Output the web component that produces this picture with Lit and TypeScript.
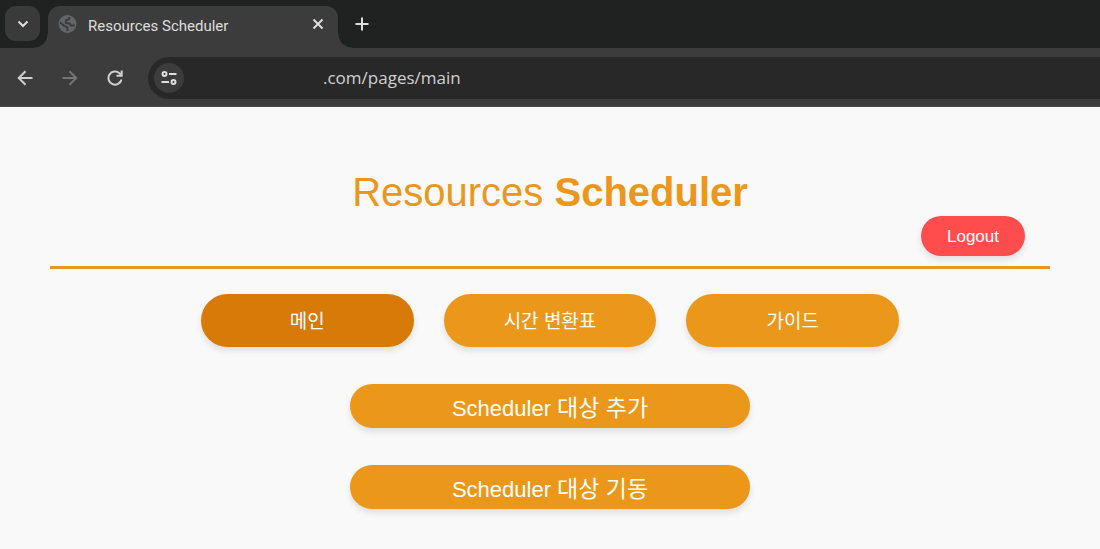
import { LitElement, html, css } from "lit";
import { customElement, state } from "lit/decorators.js";

@customElement("browser-bar")
class BrowserBar extends LitElement {
  static styles = css`
    :host {
      display: block;
      background: #3c3c3c;
      font-family: "Open Sans", "Noto Sans", sans-serif;
      color: #dedede;
    }
    button {
      border: 0;
      padding: 0;
      background: none;
      color: inherit;
      display: grid;
      place-items: center;
      flex: none;
    }
    svg {
      display: block;
      fill: none;
      stroke: currentColor;
      stroke-width: 2;
    }
    .tabs {
      display: flex;
      height: 48px;
      box-sizing: border-box;
      padding: 6px 0 0 5px;
      background: #202222;
    }
    .menu {
      width: 35px;
      height: 35px;
      border-radius: 11px;
      background: #3a3a3a;
    }
    .tab {
      position: relative;
      display: flex;
      align-items: center;
      box-sizing: border-box;
      width: 290px;
      margin-left: 8px;
      padding: 0 14px 6px 10px;
      border-radius: 12px 12px 0 0;
      background: #3c3c3c;
    }
    .tab::before,
    .tab::after {
      content: "";
      position: absolute;
      bottom: 0;
      width: 14px;
      height: 14px;
    }
    .tab::before {
      right: 100%;
      background: radial-gradient(circle at 0 0, transparent 13px, #3c3c3c 14px);
    }
    .tab::after {
      left: 100%;
      background: radial-gradient(circle at 100% 0, transparent 13px, #3c3c3c 14px);
    }
    .name {
      flex: 1;
      margin-left: 10px;
      padding-top: 4px;
      font: 15px/20px Roboto, sans-serif;
      white-space: nowrap;
    }
    .globe {
      stroke: none;
      fill: #62656a;
    }
    .globe path {
      fill: none;
      stroke: #3c3c3c;
    }
    .new {
      width: 22px;
      height: 35px;
      margin-left: 13px;
    }
    .tools {
      display: flex;
      align-items: center;
      gap: 21px;
      height: 59px;
      box-sizing: border-box;
      padding: 1px 0 0 13px;
      border-bottom: 1px solid #4c4c4c;
    }
    .tools > button {
      width: 24px;
      height: 24px;
      color: #cfcfcf;
    }
    .tools > button:disabled {
      color: #757575;
    }
    .address {
      flex: 1;
      display: flex;
      align-items: center;
      height: 42px;
      box-sizing: border-box;
      padding-left: 6px;
      border-radius: 21px 0 0 21px;
      background: #282828;
    }
    .site {
      width: 30px;
      height: 30px;
      border-radius: 50%;
      background: #3c3c3c;
    }
    input {
      flex: 1;
      min-width: 0;
      padding: 0 0 0 139px;
      border: 0;
      outline: 0;
      background: none;
      color: #d0d0d0;
      font: 17px/24px "Open Sans", "Noto Sans", sans-serif;
    }
  `;
  render() {
    return html`
      <div class="tabs">
        <button class="menu" aria-label="Search tabs">
          <svg width="12" height="12" viewBox="0 0 12 12"><path d="M1.500 3.500 6 8l4.500-4.500" /></svg>
        </button>
        <div class="tab">
          <svg class="globe" width="20" height="20" viewBox="0 0 20 20">
            <circle cx="9.500" cy="10" r="9" />
            <path d="M11.500 3c0 2-.5 2.700-2 2.700-1.800 0-1.800 1.500-1.600 3.300 3 .2 4.600.3 4.800 2.500h4M2 8.500l4.300 3.300c1.500.9 3.200.6 3.200 2.200V17" />
          </svg>
          <span class="name">Resources Scheduler</span>
          <button aria-label="Close tab">
            <svg width="12" height="12" viewBox="0 0 12 12"><path d="m1.500 1.500 9 9m0-9-9 9" /></svg>
          </button>
        </div>
        <button class="new" aria-label="New tab">
          <svg width="14" height="14" viewBox="0 0 14 14"><path d="M7 .5v13M.5 7h13" /></svg>
        </button>
      </div>
      <div class="tools">
        <button aria-label="Back">
          <svg width="16" height="16" viewBox="0 0 16 16"><path d="M15.500 8H2M8.500 1.200 1.700 8l6.800 6.800" /></svg>
        </button>
        <button aria-label="Forward" disabled>
          <svg width="16" height="16" viewBox="0 0 16 16"><path d="M.5 8H14M7.500 1.200 14.300 8l-6.800 6.800" /></svg>
        </button>
        <button aria-label="Reload">
          <svg width="16" height="16" viewBox="0 0 16 16">
            <path d="M14.500 9.500A6.600 6.600 0 1 1 12.500 3.200l2 2" />
            <path d="M14.700 .5v5.300H9.500" />
          </svg>
        </button>
        <div class="address">
          <button class="site" aria-label="Site information">
            <svg width="16" height="14" viewBox="0 0 16 14">
              <circle cx="3.500" cy="3" r="2" />
              <path d="M8 3h7.500M.5 11H8" />
              <circle cx="12.500" cy="11" r="2" />
            </svg>
          </button>
          <input aria-label="Address" .value=${".com/pages/main"} spellcheck="false" />
        </div>
      </div>
    `;
  }
}

@customElement("app-root")
class AppRoot extends LitElement {
  static styles = css`
    :host {
      display: block;
      min-height: 100vh;
      background: #f9f9f9;
      font-family: "Liberation Sans", "Noto Sans CJK KR", sans-serif;
    }
    .page {
      padding: 0 50px 40px;
    }
    header {
      display: flex;
      flex-direction: column;
      padding: 62px 25px 10px;
      border-bottom: 3px solid #eb971a;
    }
    h1 {
      margin: 0;
      text-align: center;
      color: #eb971a;
      font-size: 40px;
      line-height: 47px;
      font-weight: 400;
    }
    button {
      border: 0;
      border-radius: 30px;
      background: #eb971a;
      color: #fff;
      font-family: inherit;
      box-shadow: 0 4px 6px rgba(0, 0, 0, 0.1);
    }
    .logout {
      align-self: flex-end;
      width: 104px;
      height: 40px;
      padding: 2px 0 0;
      font-size: 17px;
      background: #ff4d4d;
    }
    nav {
      display: grid;
      grid-template-columns: repeat(3, 1fr);
      gap: 30px;
      max-width: 698px;
      margin: 25px auto 37px;
    }
    nav button {
      height: 53px;
      padding: 0 0 2px;
      font-size: 19px;
    }
    nav .active {
      background: #d87a08;
    }
    main {
      display: grid;
      gap: 37px;
      max-width: 400px;
      margin: 0 auto;
    }
    main button {
      height: 44px;
      padding: 0;
      font-size: 22px;
    }
    .target {
      font-size: 23px;
    }
  `;

  @state() private current = 0;
  private tabs = ["메인", "시간 변환표", "가이드"];
  private actions = ["대상 추가", "대상 기동"];

  render() {
    return html`
      <browser-bar></browser-bar>
      <div class="page">
        <header>
          <h1>Resources <strong>Scheduler</strong></h1>
          <button class="logout">Logout</button>
        </header>
        <nav>
          ${this.tabs.map(
            (name, i) => html`<button
              class=${i === this.current ? "active" : ""}
              @click=${() => (this.current = i)}
            >${name}</button>`
          )}
        </nav>
        <main>
          ${this.actions.map(
            (name) => html`<button>Scheduler <span class="target">${name}</span></button>`
          )}
        </main>
      </div>
    `;
  }
}
